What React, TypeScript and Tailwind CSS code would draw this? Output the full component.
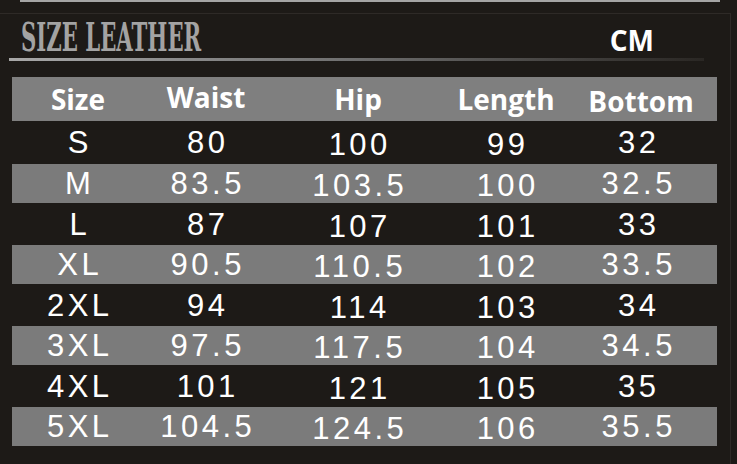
const rows = [
  { size: "S", waist: "80", hip: "100", length: "99", bottom: "32" },
  { size: "M", waist: "83.5", hip: "103.5", length: "100", bottom: "32.5" },
  { size: "L", waist: "87", hip: "107", length: "101", bottom: "33" },
  { size: "XL", waist: "90.5", hip: "110.5", length: "102", bottom: "33.5" },
  { size: "2XL", waist: "94", hip: "114", length: "103", bottom: "34" },
  { size: "3XL", waist: "97.5", hip: "117.5", length: "104", bottom: "34.5" },
  { size: "4XL", waist: "101", hip: "121", length: "105", bottom: "35" },
  { size: "5XL", waist: "104.5", hip: "124.5", length: "106", bottom: "35.5" },
];

const cols = "grid grid-cols-[132px_124px_180px_116px_146px]";

export default function App() {
  return (
    <div className="w-[737px] h-[464px] bg-[#1d1a17] overflow-hidden">
      {/* top strip */}
      <div className="ml-[20px] w-[700px] h-[2px] bg-[#a5a5a5]" />

      <div className="mt-[11px] w-[731px] h-[451px] border-t border-r border-[#2e2a27]">
        {/* title */}
        <div className="flex items-start h-[44px]">
          <span
            className="ml-[21px] mt-[3px] inline-block origin-left scale-x-[0.53] text-[40px] leading-none font-bold text-[#a3a3a3] whitespace-nowrap"
            style={{ fontFamily: '"DejaVu Serif", "Liberation Serif", serif' }}
          >
            SIZE LEATHER
          </span>
          <span className="ml-auto mr-[76px] mt-[12px] text-[28px] leading-none font-bold text-white font-['Open_Sans',sans-serif]">
            CM
          </span>
        </div>
        <div className="ml-[9px] w-[695px] h-[3px] bg-gradient-to-r from-[#a8a8a8] via-[#6e6e6e] to-[#2a2724]" />

        {/* table */}
        <div className="ml-[12px] mt-[16px] w-[705px] font-['Liberation_Sans',Arial,sans-serif] text-white">
          <div className={`${cols} h-[44px] items-center bg-[#7f7f7f] font-['Open_Sans',sans-serif] font-bold text-[28px] leading-none`}>
            <span className="text-center">Size</span>
            <span className="text-center -translate-y-[2px]">Waist</span>
            <span className="text-center">Hip</span>
            <span className="text-center">Length</span>
            <span className="text-center pl-[8px] translate-y-[2px]">Bottom</span>
          </div>
          {rows.map((r, i) => (
            <div
              key={r.size}
              className={`${cols} items-center text-[31px] leading-none tracking-[3.5px] ${
                i % 2 === 1 ? "h-[39px] bg-[#7b7b7b]" : i === 0 ? "h-[43px]" : "h-[42px]"
              }`}
            >
              <span className="text-center pl-[3.5px]">{r.size}</span>
              <span className="text-center pl-[3.5px]">{r.waist}</span>
              <span className="text-center pl-[3.5px] translate-y-[2px]">{r.hip}</span>
              <span className="text-center pl-[3.5px] translate-y-[2px]">{r.length}</span>
              <span className="text-center pl-[3.5px]">{r.bottom}</span>
            </div>
          ))}
        </div>
      </div>
    </div>
  );
}
